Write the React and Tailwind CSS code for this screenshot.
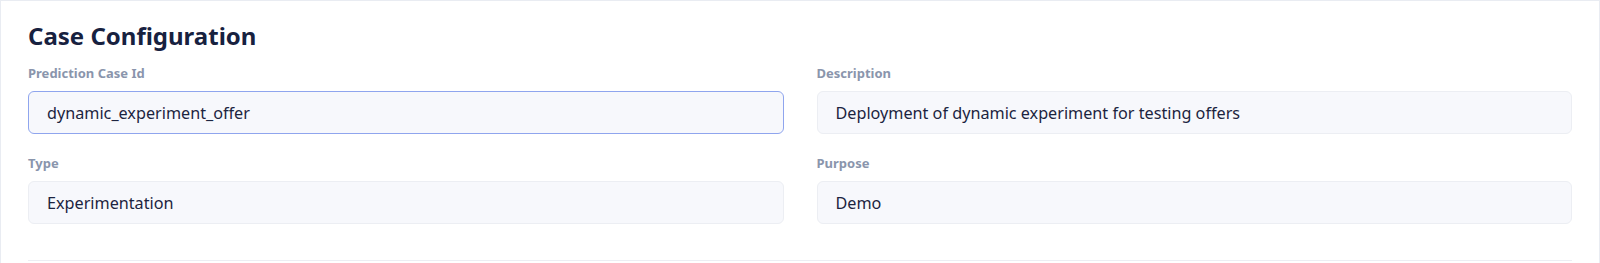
export default function App() {
  const fields = [
    { label: "Prediction Case Id", value: "dynamic_experiment_offer", focused: true },
    { label: "Description", value: "Deployment of dynamic experiment for testing offers" },
    { label: "Type", value: "Experimentation" },
    { label: "Purpose", value: "Demo" },
  ];

  return (
    <div className="w-full h-[263px] bg-white font-['Noto_Sans',sans-serif] overflow-hidden">
      <div className="border border-b-0 border-[#e9ecf2] px-[27px] pt-[19px] h-full">
        <h2 className="text-[24px] leading-[32px] font-bold text-[#17213f]">Case Configuration</h2>
        <div className="grid grid-cols-2 gap-x-[33px] gap-y-[20px] mt-[12px]">
          {fields.map((f) => (
            <div key={f.label}>
              <label className="block text-[13px] leading-[18px] font-bold text-[#8a95ac] mb-[9px]">
                {f.label}
              </label>
              <input
                readOnly
                value={f.value}
                className={`w-full h-[43px] rounded-[6px] px-[18px] text-[16.2px] text-[#1c2440] outline-none ${
                  f.focused ? "bg-[#f7f8fc] border border-[#8fa5ee]" : "bg-[#f7f8fc] border border-[#eceef3]"
                }`}
              />
            </div>
          ))}
        </div>
        <div className="mt-[36px] border-t border-[#eceef3]" />
      </div>
    </div>
  );
}
